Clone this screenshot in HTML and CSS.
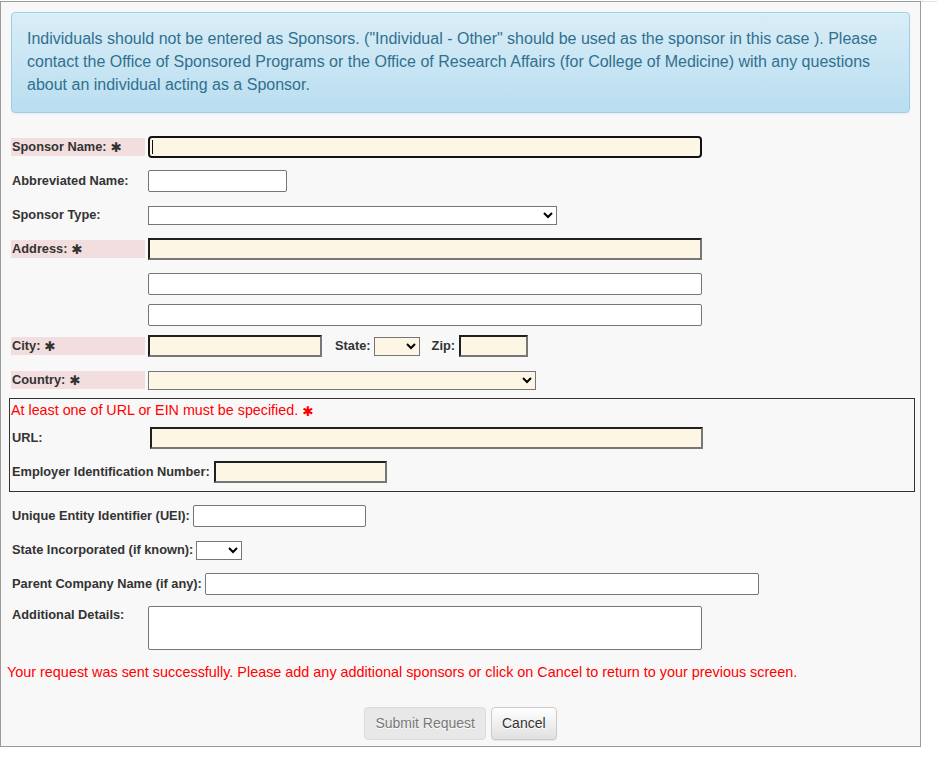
FILE: index.html
```html
<!DOCTYPE html>
<html>
<head>
<meta charset="utf-8">
<title>Add Sponsor</title>
<link rel="stylesheet" href="styles.css">
</head>
<body>
<div class="panel">
  <div class="alert">Individuals should not be entered as Sponsors. ("Individual - Other" should be used as the sponsor in this case ). Please contact the Office of Sponsored Programs or the Office of Research Affairs (for College of Medicine) with any questions about an individual acting as a Sponsor.</div>
  <form class="form">
    <div class="row first">
      <label class="lbl req">Sponsor Name: <span class="star">✱</span></label>
      <input class="field cream focus w-full" type="text">
    </div>
    <div class="row">
      <label class="lbl">Abbreviated Name:</label>
      <input class="field white w-abbr" type="text">
    </div>
    <div class="row">
      <label class="lbl">Sponsor Type:</label>
      <select class="sel white w-type"><option></option></select>
    </div>
    <div class="row">
      <label class="lbl req">Address: <span class="star">✱</span></label>
      <input class="field cream w-full" type="text">
    </div>
    <div class="row r-addr2">
      <span class="lbl"></span>
      <input class="field white w-full" type="text">
    </div>
    <div class="row r-addr3">
      <span class="lbl"></span>
      <input class="field white w-full" type="text">
    </div>
    <div class="row r-city">
      <label class="lbl req">City: <span class="star">✱</span></label>
      <input class="field cream w-city" type="text">
      <label class="lbl inline">State:</label>
      <select class="sel cream-sel w-state"><option></option></select>
      <label class="lbl inline zip">Zip:</label>
      <input class="field cream w-zip" type="text">
    </div>
    <div class="row">
      <label class="lbl req">Country: <span class="star">✱</span></label>
      <select class="sel cream-sel w-country"><option></option></select>
    </div>
    <div class="group">
      <div class="note">At least one of URL or EIN must be specified. <span class="star red">✱</span></div>
      <div class="row g-first">
        <label class="lbl g">URL:</label>
        <input class="field cream w-url" type="text">
      </div>
      <div class="row">
        <label class="lbl g">Employer Identification Number:</label>
        <input class="field cream w-ein" type="text">
      </div>
    </div>
    <div class="row r-after">
      <label class="lbl auto">Unique Entity Identifier (UEI):</label>
      <input class="field white w-uei" type="text">
    </div>
    <div class="row">
      <label class="lbl auto">State Incorporated (if known):</label>
      <select class="sel white w-si"><option></option></select>
    </div>
    <div class="row">
      <label class="lbl auto">Parent Company Name (if any):</label>
      <input class="field white w-full" type="text">
    </div>
    <div class="row tall">
      <label class="lbl">Additional Details:</label>
      <textarea class="ta"></textarea>
    </div>
    <div class="msg">Your request was sent successfully. Please add any additional sponsors or click on Cancel to return to your previous screen.</div>
    <div class="actions">
      <button type="button" class="btn" disabled>Submit Request</button>
      <button type="button" class="btn">Cancel</button>
    </div>
  </form>
</div>
</body>
</html>
```
FILE: styles.css
```css
html {
  background: #fff;
}
body {
  margin: 0;
  padding-top: 1px;
  font-family: "Liberation Sans", Arial, sans-serif;
  color: #333;
  background: linear-gradient(#e3e3e3, #e3e3e3) no-repeat 0 1px / 100% 1px;
}
.panel {
  position: relative;
  width: 921px;
  box-sizing: border-box;
  border: 1px solid #9a9a9a;
  background: #f8f8f8;
  padding: 10px 10px 6px;
}
.alert {
  border: 1px solid #9acfea;
  border-radius: 4px;
  padding: 14px 15px 16px;
  background: linear-gradient(to bottom, #d9edf7 0, #b9def0 100%);
  color: #31708f;
  font-size: 16px;
  line-height: 23px;
  box-shadow: inset 0 1px 0 rgba(255,255,255,.25), 0 1px 2px rgba(0,0,0,.05);
}
.form {
  margin: 0;
}
.row {
  display: flex;
  align-items: center;
  height: 22px;
  margin-top: 12px;
}
.row.first { margin-top: 23px; }
.row.r-addr2 { margin-top: 13px; }
.row.r-addr3 { margin-top: 9px; }
.row.r-city { margin-top: 9px; }
.row.r-after { margin-top: 13px; }
.row.g-first { margin-top: 7px; }
.row.tall {
  height: auto;
  align-items: flex-start;
  margin-top: 11px;
}
.lbl {
  box-sizing: border-box;
  flex: none;
  min-width: 134px;
  padding-left: 1px;
  margin-right: 3px;
  font-size: 12.8px;
  font-weight: bold;
  line-height: 18px;
  white-space: nowrap;
  color: #333;
}
.lbl.g { min-width: 135px; margin-right: 4px; }
.lbl.auto { min-width: 0; margin-right: 3px; }
.lbl.inline {
  min-width: 0;
  padding-left: 0;
  margin: 0 3px 0 13px;
}
.lbl.zip { margin: 0 4px 0 12px; }
.req { background: #f2dede; }
.star {
  display: inline-block;
  font-family: "DejaVu Sans", sans-serif;
  font-size: 13.5px;
  font-weight: bold;
  line-height: 10px;
  vertical-align: -1px;
  color: #333;
}
.star.red { color: #f00; font-size: 13.5px; }
.field {
  box-sizing: border-box;
  flex: none;
  height: 22px;
  margin: 0;
  padding: 1px 2px;
  font-family: "Liberation Sans", Arial, sans-serif;
  font-size: 13px;
}
.white {
  background: #fff;
  border: 1px solid #767676;
  border-radius: 2px;
}
.cream {
  background-color: #fef6e4;
  border-width: 2px;
  border-style: solid;
  border-color: #202020 #777 #777 #202020;
  border-radius: 0;
}
.cream.focus {
  border: 2px solid #121212;
  border-radius: 4px;
  outline: none;
  background-image: linear-gradient(#111, #111);
  background-repeat: no-repeat;
  background-size: 1px 14px;
  background-position: 2px center;
}
.sel {
  box-sizing: border-box;
  flex: none;
  height: 19px;
  margin: 0;
  font-family: "Liberation Sans", Arial, sans-serif;
  font-size: 13px;
  border: 1px solid #767676;
  border-radius: 0;
  color: #000;
}
.sel.white { border-radius: 0; background-color: #fff; }
.cream-sel { background-color: #fef6e4; }
.w-full { width: 554px; }
.w-abbr { width: 139px; }
.w-type { width: 409px; }
.w-city { width: 174px; }
.w-state { width: 46px; }
.w-zip { width: 69px; }
.w-country { width: 388px; }
.w-url { width: 553px; }
.w-ein { width: 173px; }
.w-uei { width: 173px; }
.w-si { width: 46px; }
.group {
  border: 1px solid #333;
  margin: 7px -5px 0 -2px;
  padding: 1px 0 8px 1px;
}
.note {
  color: #f00;
  font-size: 14.3px;
  line-height: 20px;
  height: 20px;
}
.ta {
  box-sizing: border-box;
  width: 554px;
  height: 44px;
  margin: 0;
  background: #fff;
  border: 1px solid #767676;
  border-radius: 2px;
  resize: none;
}
.msg {
  color: #f00;
  font-size: 14.4px;
  line-height: 20px;
  height: 20px;
  margin: 12px 0 0 -4px;
  white-space: nowrap;
}
.actions {
  display: flex;
  justify-content: center;
  gap: 5px;
  margin-top: 25px;
}
.btn {
  font-family: "Liberation Sans", Arial, sans-serif;
  font-size: 14px;
  line-height: 19px;
  padding: 6px 10px;
  border: 1px solid #ccc;
  border-radius: 4px;
  color: #333;
  text-shadow: 0 1px 0 #fff;
  background-color: #fff;
  background-image: linear-gradient(to bottom, #fff 0, #e0e0e0 100%);
  box-shadow: inset 0 1px 0 rgba(255,255,255,.15), 0 1px 1px rgba(0,0,0,.075);
  cursor: pointer;
}
.btn:disabled {
  background-image: none;
  background-color: #e0e0e0;
  border-color: #ccc;
  opacity: .65;
  box-shadow: none;
  cursor: not-allowed;
}
```
